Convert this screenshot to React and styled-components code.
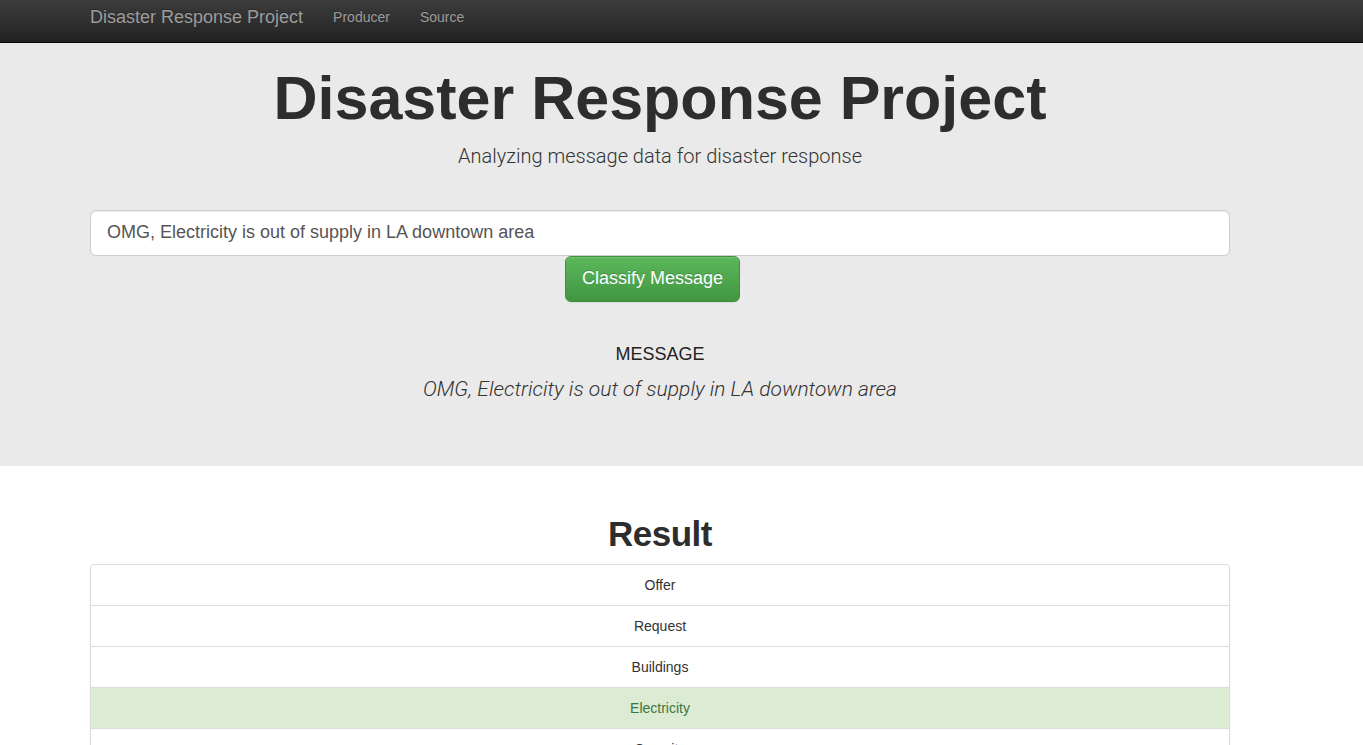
import React from 'react'
import styled, { createGlobalStyle } from 'styled-components'

const GlobalStyle = createGlobalStyle`
  * { box-sizing: border-box; }
  body {
    margin: 0;
    font-family: "Liberation Sans", Arial, sans-serif;
    font-size: 14px;
    line-height: 1.42857;
    color: #333;
    background: #fff;
  }
`

const Navbar = styled.nav`
  height: 43px;
  background: linear-gradient(to bottom, #3c3c3c 0%, #222 100%);
  border-bottom: 1px solid #080808;
`

const Container = styled.div`
  width: 1170px;
  margin-left: 75px;
  padding: 0 15px;
`

const NavInner = styled(Container)`
  display: flex;
  align-items: center;
  height: 100%;
  padding-bottom: 6px;
`

const Brand = styled.a`
  font-size: 18px;
  color: #9d9d9d;
  text-decoration: none;
  margin-right: 30px;
  text-shadow: 0 -1px 0 rgba(0, 0, 0, 0.25);
`

const NavLink = styled.a`
  font-size: 14px;
  color: #9d9d9d;
  text-decoration: none;
  margin-right: 30px;
  text-shadow: 0 -1px 0 rgba(0, 0, 0, 0.25);
`

const Jumbotron = styled.section`
  background: #eaeaea;
  padding: 22px 0 61px;
`

const Title = styled.h1`
  margin: 0;
  text-align: center;
  font-size: 61px;
  font-weight: 700;
  color: #2d2d2d;
  line-height: 1.1;
`

const Lead = styled.p`
  margin: 10px 0 0;
  text-align: center;
  font-family: "Roboto", "Liberation Sans", sans-serif;
  font-size: 20px;
  font-weight: 300;
  color: #333;
`

const Form = styled.form`
  margin-top: 39px;
  display: flex;
  flex-direction: column;
  align-items: center;
`

const Input = styled.input`
  width: 100%;
  height: 46px;
  padding: 10px 16px;
  font-family: "Liberation Sans", Arial, sans-serif;
  font-size: 18px;
  color: #555;
  background: #fff;
  border: 1px solid #ccc;
  border-radius: 6px;
  box-shadow: inset 0 1px 1px rgba(0, 0, 0, 0.075);
  outline: none;
`

const Button = styled.button`
  margin-right: 15px;
  height: 46px;
  padding: 0 16px;
  font-family: "Liberation Sans", Arial, sans-serif;
  font-size: 18px;
  color: #fff;
  background: linear-gradient(to bottom, #5cb85c 0%, #419641 100%);
  border: 1px solid #3e8f3e;
  border-radius: 6px;
  text-shadow: 0 -1px 0 rgba(0, 0, 0, 0.2);
  box-shadow: inset 0 1px 0 rgba(255, 255, 255, 0.15), 0 1px 1px rgba(0, 0, 0, 0.075);
`

const MessageBlock = styled.div`
  margin-top: 40px;
  text-align: center;
`

const MessageLabel = styled.h4`
  margin: 0;
  font-size: 18px;
  font-weight: 500;
  color: #222;
  text-transform: uppercase;
`

const MessageText = styled.p`
  margin: 8px 0 0;
  font-family: "Roboto", "Liberation Sans", sans-serif;
  font-size: 21px;
  font-weight: 300;
  font-style: italic;
  color: #333;
`

const ResultSection = styled(Container)`
  padding-top: 49px;
`

const ResultTitle = styled.h2`
  margin: 0 0 10px;
  text-align: center;
  font-size: 35px;
  font-weight: 700;
  letter-spacing: -0.5px;
  line-height: 1.1;
  color: #2d2d2d;
`

const List = styled.ul`
  margin: 0;
  padding: 0;
  list-style: none;
  border-radius: 4px;
  box-shadow: 0 1px 2px rgba(0, 0, 0, 0.075);
`

const Item = styled.li`
  padding: 10px 15px;
  text-align: center;
  font-size: 14px;
  line-height: 20px;
  border: 1px solid #ddd;
  margin-bottom: -1px;
  color: ${p => (p.$hit ? '#3c763d' : '#333')};
  background: ${p => (p.$hit ? '#dbebd4' : '#fff')};
  &:first-child {
    border-top-left-radius: 4px;
    border-top-right-radius: 4px;
  }
`

const categories = [
  { name: 'Offer' },
  { name: 'Request' },
  { name: 'Buildings' },
  { name: 'Electricity', hit: true },
  { name: 'Security' },
  { name: 'Military' },
]

const msg = 'OMG, Electricity is out of supply in LA downtown area'

export default function App() {
  return (
    <>
      <GlobalStyle />
      <Navbar>
        <NavInner>
          <Brand href="#">Disaster Response Project</Brand>
          <NavLink href="#">Producer</NavLink>
          <NavLink href="#">Source</NavLink>
        </NavInner>
      </Navbar>
      <Jumbotron>
        <Container>
          <Title>Disaster Response Project</Title>
          <Lead>Analyzing message data for disaster response</Lead>
          <Form onSubmit={e => e.preventDefault()}>
            <Input defaultValue={msg} />
            <Button type="submit">Classify Message</Button>
          </Form>
          <MessageBlock>
            <MessageLabel>Message</MessageLabel>
            <MessageText>{msg}</MessageText>
          </MessageBlock>
        </Container>
      </Jumbotron>
      <ResultSection>
        <ResultTitle>Result</ResultTitle>
        <List>
          {categories.map(c => (
            <Item key={c.name} $hit={c.hit}>{c.name}</Item>
          ))}
        </List>
      </ResultSection>
    </>
  )
}
